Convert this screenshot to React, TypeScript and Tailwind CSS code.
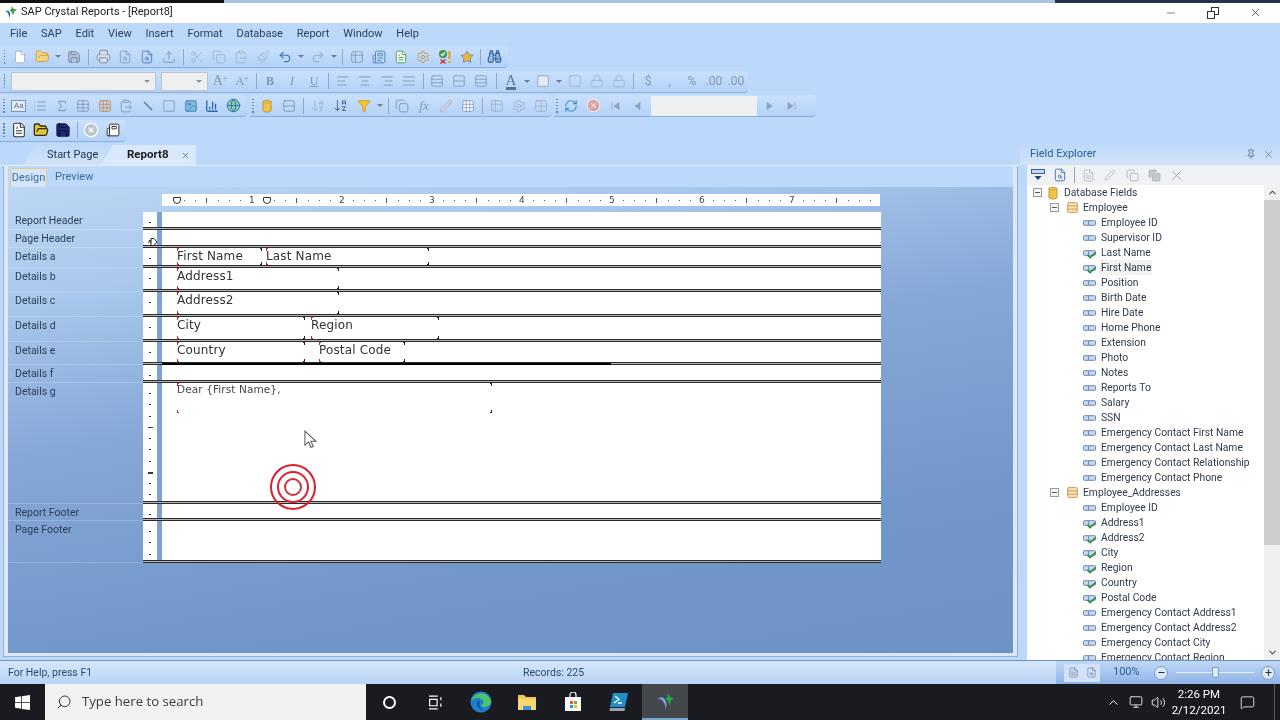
import type { ReactNode } from "react";
import {
  AlignCenter, AlignJustify, AlignLeft, AlignRight, ArrowDownAZ, Binoculars, ChartColumn, ChevronDown, ChevronUp,
  ClipboardPaste, Copy, File, FileSearch, Filter, FolderOpen, Globe, Grid2x2, Grid3x3, Image, MessageSquare,
  Minus, Newspaper, Paintbrush, Pencil, Pin, Plus, Printer, Redo2, RefreshCw, Rows2, Rows3, Save, Scissors, Search,
  Sigma, Square, Table, Table2, Undo2, Upload, X, CircleX, Settings, List, Lock, FileText, Star, Check, Volume2, Monitor,
} from "lucide-react";

const ui = "font-['Roboto',sans-serif]";
const gray = "h-[14px] w-[14px] text-[#7f93ad]";
const pale = "h-[14px] w-[14px] text-[#9fb0c6]";
const blue = "h-[14px] w-[14px] text-[#3f74b5]";

function Slot({ children, narrow }: { children?: ReactNode; narrow?: boolean }) {
  return <span className={narrow ? "flex w-[21.5px] shrink-0 items-center justify-center" : "flex w-[22px] shrink-0 items-center justify-center"}>{children}</span>;
}

function Drop() {
  return (
    <span className="flex w-[10px] shrink-0 items-center justify-center">
      <span className="h-0 w-0 border-x-[3px] border-t-[3px] border-x-transparent border-t-[#6f7f93]" />
    </span>
  );
}

function Sep({ w = "w-[6px]" }: { w?: string }) {
  return (
    <span className={w + " flex h-[16px] shrink-0 justify-center"}>
      <span className="h-full w-px bg-[#8fa9c9]" />
    </span>
  );
}

function Grip({ w = "w-[8px]" }: { w?: string }) {
  return (
    <span className={w + " flex h-[16px] shrink-0 flex-col items-center justify-between py-px"}>
      {[0, 1, 2, 3, 4].map((i) => <span key={i} className="h-[1.5px] w-[1.5px] bg-[#6d84a3]" />)}
    </span>
  );
}

function Bar({ children, className = "" }: { children: ReactNode; className?: string }) {
  return (
    <div className={"flex h-[22px] items-center rounded-r-[4px] border-b border-[#8badd7] bg-gradient-to-b from-[#c9e0fc] to-[#b3d2f7] " + className}>
      {children}
    </div>
  );
}

function Glyph({ children, className = "" }: { children: ReactNode; className?: string }) {
  return <span className={"text-[12px] leading-none text-[#8497ae] " + className}>{children}</span>;
}

function DbIcon() {
  return (
    <svg viewBox="0 0 10 14" className="h-[14px] w-[10px]">
      <path d="M1 2.500C1 1 9 1 9 2.500v9C9 13.500 1 13.500 1 11.500z" fill="#f0c64a" stroke="#b98f2d" strokeWidth="0.9" />
      <path d="M1 3c1.500 1.300 6.500 1.300 8 0" fill="none" stroke="#b98f2d" strokeWidth="0.7" />
    </svg>
  );
}

function Nav({ d }: { d: string }) {
  return (
    <svg viewBox="0 0 10 10" className="h-[10px] w-[10px]" fill="#8fa2ba" stroke="#8fa2ba" strokeWidth="0.7">
      <path d={d} />
    </svg>
  );
}

function Toolbars() {
  return (
    <div className="flex h-[98px] flex-col">
      <div className="flex h-[24px] items-center">
        <Bar className="w-[508px]">
          <Grip w="w-[9px]" />
          <Slot><File className="h-[14px] w-[14px] fill-white text-[#8ea2bb]" strokeWidth={1.3} /></Slot>
          <Slot><FolderOpen className="h-[15px] w-[15px] fill-[#f4d587] text-[#c79a3f]" strokeWidth={1.4} /></Slot>
          <Drop />
          <Slot><Save className="h-[14px] w-[14px] fill-[#b6c6d9] text-[#667f9e]" strokeWidth={1.5} /></Slot>
          <Sep w="w-[7px]" />
          <Slot><Printer className="h-[15px] w-[15px] fill-[#d7dfe9] text-[#74879f]" strokeWidth={1.4} /></Slot>
          <Slot><FileSearch className={gray} strokeWidth={1.4} /></Slot>
          <Slot><FileSearch className={blue} strokeWidth={1.4} /></Slot>
          <Slot><Upload className={gray} strokeWidth={1.5} /></Slot>
          <Sep />
          <Slot><Scissors className={pale} strokeWidth={1.4} /></Slot>
          <Slot><Copy className={pale} strokeWidth={1.4} /></Slot>
          <Slot><ClipboardPaste className={pale} strokeWidth={1.4} /></Slot>
          <Slot><Paintbrush className={pale} strokeWidth={1.4} /></Slot>
          <Slot><Undo2 className={blue} strokeWidth={2} /></Slot>
          <Drop />
          <span className="w-[1px]" />
          <Slot><Redo2 className={pale} strokeWidth={2} /></Slot>
          <Drop />
          <Sep w="w-[7px]" />
          <Slot><Table2 className={gray} strokeWidth={1.4} /></Slot>
          <Slot><Newspaper className={blue} strokeWidth={1.4} /></Slot>
          <Slot><FileText className="h-[14px] w-[14px] fill-white text-[#3f9a4b]" strokeWidth={1.5} /></Slot>
          <Slot><Settings className="h-[14px] w-[14px] text-[#c09a42]" strokeWidth={1.6} /></Slot>
          <Slot>
            <svg viewBox="0 0 16 16" className="h-[16px] w-[16px]">
              <circle cx="6" cy="5" r="4" fill="#3f9a4b" />
              <path d="M4 5l1.5 1.5L8 3.5" stroke="#fff" strokeWidth="1.2" fill="none" />
              <path d="M3.5 10.5l5 4M8.5 10.5l-5 4" stroke="#c7362b" strokeWidth="1.6" />
              <path d="M12.5 2v8M12.5 12v2" stroke="#e2a12f" strokeWidth="2.2" />
            </svg>
          </Slot>
          <Slot><Star className="h-[14px] w-[14px] fill-[#f0b62f] text-[#4f7fb8]" strokeWidth={1.3} /></Slot>
          <Sep w="w-[5px]" />
          <Slot><Binoculars className="h-[15px] w-[15px] fill-[#9dbbe0] text-[#2f5f9f]" strokeWidth={1.7} /></Slot>
        </Bar>
      </div>

      <div className="flex h-[25px] items-center">
        <Bar className="w-[748px]">
          <Grip w="w-[9px]" />
          <span className="ml-[2px] flex h-[19px] w-[145px] shrink-0 items-center justify-end border border-[#b9c4d2] bg-[#efefef] pr-[5px]">
            <span className="h-0 w-0 border-x-[3px] border-t-[3px] border-x-transparent border-t-[#8795a6]" />
          </span>
          <span className="ml-[5px] flex h-[19px] w-[47px] shrink-0 items-center justify-end border border-[#b9c4d2] bg-[#efefef] pr-[5px]">
            <span className="h-0 w-0 border-x-[3px] border-t-[3px] border-x-transparent border-t-[#8795a6]" />
          </span>
          <span className="w-px" />
          <Slot><Glyph className="font-['Liberation_Serif',serif] text-[14px]">A<sup className="text-[8px]">+</sup></Glyph></Slot>
          <Slot><Glyph className="font-['Liberation_Serif',serif] text-[10px]">A<sup className="text-[8px]">+</sup></Glyph></Slot>
          <Sep />
          <Slot><Glyph className="font-['Liberation_Serif',serif] font-bold">B</Glyph></Slot>
          <Slot><Glyph className="font-['Liberation_Serif',serif] italic">I</Glyph></Slot>
          <Slot><Glyph className="font-['Liberation_Serif',serif] underline">U</Glyph></Slot>
          <Sep w="w-[7px]" />
          <Slot><AlignLeft className={gray} strokeWidth={1.5} /></Slot>
          <Slot><AlignCenter className={gray} strokeWidth={1.5} /></Slot>
          <Slot><AlignRight className={gray} strokeWidth={1.5} /></Slot>
          <Slot><AlignJustify className={gray} strokeWidth={1.5} /></Slot>
          <Sep />
          <Slot><Rows3 className={gray} strokeWidth={1.3} /></Slot>
          <Slot><Rows2 className={gray} strokeWidth={1.3} /></Slot>
          <Slot><Rows3 className={gray} strokeWidth={1.3} /></Slot>
          <Sep w="w-[8px]" />
          <Slot>
            <span className="flex flex-col items-center border-b-[3px] border-[#59708e] font-['Liberation_Serif',serif] text-[15px] leading-[14px] text-[#5d7594]">A</span>
          </Slot>
          <Drop />
          <Slot><Grid2x2 className="h-[14px] w-[14px] fill-[#e4ebf4] text-[#8798ad]" strokeWidth={1.2} /></Slot>
          <Drop />
          <Slot><Square className={pale} strokeWidth={1.4} /></Slot>
          <Slot><Lock className={pale} strokeWidth={1.4} /></Slot>
          <Slot><Lock className={pale} strokeWidth={1.4} /></Slot>
          <Sep w="w-[7px]" />
          <Slot><Glyph>$</Glyph></Slot>
          <Slot><Glyph>,</Glyph></Slot>
          <Slot><Glyph>%</Glyph></Slot>
          <Slot><Glyph className="text-[9px]">.00</Glyph></Slot>
          <Slot><Glyph className="text-[9px]">.00</Glyph></Slot>
        </Bar>
      </div>

      <div className="flex h-[24px] items-center gap-[3px]">
        <Bar className="w-[247px]">
          <Grip />
          <Slot narrow><span className="flex h-[12px] w-[15px] items-center justify-center border border-[#7f93ad] bg-[#dfe8f3] text-[8px] leading-none text-[#5f7690]">Aa</span></Slot>
          <Slot narrow><List className={gray} strokeWidth={1.5} /></Slot>
          <Slot narrow><Sigma className={gray} strokeWidth={1.7} /></Slot>
          <Slot narrow><Table className={gray} strokeWidth={1.4} /></Slot>
          <Slot narrow><Grid3x3 className="h-[14px] w-[14px] text-[#c98644]" strokeWidth={1.4} /></Slot>
          <Slot narrow><ClipboardPaste className={gray} strokeWidth={1.4} /></Slot>
          <Slot narrow><svg viewBox="0 0 14 14" className="h-[14px] w-[14px]"><path d="M3 3l8 8" stroke="#5f7690" strokeWidth="1.2" /></svg></Slot>
          <Slot narrow><Square className={gray} strokeWidth={1.3} /></Slot>
          <Slot narrow><Image className="h-[14px] w-[14px] fill-[#7fc0dc] text-[#3f74b5]" strokeWidth={1.5} /></Slot>
          <Slot narrow><ChartColumn className="h-[14px] w-[14px] text-[#2f66ad]" strokeWidth={2.2} /></Slot>
          <Slot narrow><Globe className="h-[15px] w-[15px] fill-[#8fc7a6] text-[#2b76b5]" strokeWidth={1.5} /></Slot>
        </Bar>
        <Bar className="w-[302px]">
          <Grip w="w-[6px]" />
          <Slot><DbIcon /></Slot>
          <Slot><Rows2 className={gray} strokeWidth={1.5} /></Slot>
          <Sep />
          <span className="w-px" />
          <Slot><ArrowDownAZ className={pale} strokeWidth={1.5} /></Slot>
          <Slot><ArrowDownAZ className="h-[15px] w-[15px] text-[#3d6aa5]" strokeWidth={1.6} /></Slot>
          <span className="w-[2px]" />
          <Slot><Filter className="h-[14px] w-[14px] fill-[#f2c430] text-[#c99c22]" strokeWidth={1.4} /></Slot>
          <Drop />
          <Sep />
          <Slot><Copy className={gray} strokeWidth={1.4} /></Slot>
          <Slot><Glyph className="font-['Liberation_Serif',serif] text-[13px] italic text-[#6d829c]">fx</Glyph></Slot>
          <Slot><Pencil className="h-[14px] w-[14px] text-[#cfa3a3]" strokeWidth={1.5} /></Slot>
          <Slot><Grid3x3 className="h-[14px] w-[14px] fill-white text-[#6f8db5]" strokeWidth={1.2} /></Slot>
          <Sep w="w-[7px]" />
          <Slot><Table2 className={pale} strokeWidth={1.5} /></Slot>
          <Slot><Settings className={pale} strokeWidth={1.6} /></Slot>
          <Slot><Grid2x2 className={pale} strokeWidth={1.5} /></Slot>
        </Bar>
        <Bar className="w-[262px] -ml-[1px]">
          <Grip w="w-[6px]" />
          <Slot><RefreshCw className="h-[14px] w-[14px] text-[#3f8fc9]" strokeWidth={2} /></Slot>
          <Slot><CircleX className="h-[15px] w-[15px] fill-[#d8a3a3] text-[#f4e8e8]" strokeWidth={1.8} /></Slot>
          <Slot><Nav d="M2 1.500v7M9 1.500L4 5l5 3.500z" /></Slot>
          <Slot><Nav d="M8 1.500L3 5l5 3.500z" /></Slot>
          <span className="ml-[3px] mr-[2px] h-[20px] w-[106px] shrink-0 bg-[#eeeff1]" />
          <Slot><Nav d="M2 1.500L7 5 2 8.500z" /></Slot>
          <Slot><Nav d="M8 1.500v7M1 1.500L6 5 1 8.500z" /></Slot>
        </Bar>
      </div>

      <div className="flex h-[25px] items-center">
        <Bar className="w-[126px]">
          <Grip />
          <Slot><FileText className="h-[16px] w-[16px] fill-white text-[#333]" strokeWidth={1.6} /></Slot>
          <Slot><FolderOpen className="h-[16px] w-[16px] fill-[#e6c23f] text-[#24300f]" strokeWidth={1.9} /></Slot>
          <Slot><Save className="h-[16px] w-[16px] fill-[#1d2a7a] text-[#10143f]" strokeWidth={1.9} /></Slot>
          <Sep />
          <Slot><CircleX className="h-[16px] w-[16px] fill-[#b9c2cd] text-white" strokeWidth={1.8} /></Slot>
          <Slot><Newspaper className="h-[14px] w-[14px] fill-white text-[#222]" strokeWidth={1.6} /></Slot>
        </Bar>
      </div>
    </div>
  );
}

function Ruler() {
  const ticks = Array.from({ length: 63 }, (_, i) => i + 1);
  return (
    <div className="relative ml-[154px] flex h-[12px] w-[718px] items-center bg-white pl-[5.6px] font-['DejaVu_Sans',sans-serif] text-[9px] leading-none text-[#444]">
      {ticks.map((t) => (
        <span key={t} className="flex w-[11.25px] shrink-0 justify-center">
          {t % 8 === 0 ? t / 8 : t % 4 === 0 ? <span className="h-[5px] w-px bg-[#555]" /> : <span className="h-px w-px bg-[#555]" />}
        </span>
      ))}
      <span className="absolute left-[11px] top-[3px] h-[7px] w-[8px] rounded-b-[4px] border border-[#333] bg-white" />
      <span className="absolute left-[101px] top-[3px] h-[7px] w-[8px] rounded-b-[4px] border border-[#333] bg-white" />
    </div>
  );
}

function Field({ w, ml = "", children, className = "pt-[1px]" }: { w: string; ml?: string; children?: ReactNode; className?: string }) {
  return (
    <div className={"relative h-full shrink-0 " + w + " " + ml + " " + className}>
      <span className="absolute left-0 top-0 h-[3px] w-[2px] border-l border-t border-[#d5202e]" />
      <span className="absolute bottom-0 left-0 h-[3px] w-[2px] border-b border-l border-[#d5202e]" />
      <span className="absolute right-0 top-0 h-[3px] w-[2px] border-r border-t border-[#222]" />
      <span className="absolute bottom-0 right-0 h-[3px] w-[2px] border-b border-r border-[#222]" />
      {children}
    </div>
  );
}

function Section({ label, h, dots, children, thick, long }: { label: string; h: string; dots: number; children?: ReactNode; thick?: boolean; long?: boolean }) {
  return (
    <div className="flex">
      <div className="w-[135px] shrink-0 border-b border-[#ffffff33] pl-[7px] pt-[2px] text-[10.5px] leading-[14px] text-[#2c3e55]">{label}</div>
      <div className="w-[738px] shrink-0">
        <div className={"flex " + h}>
          <div className="flex w-[14px] shrink-0 flex-col items-center bg-white pt-[10px]">
            {Array.from({ length: dots }, (_, i) => (
              <span key={i} className="flex h-[11.25px] shrink-0 justify-center">
                <span className={long && i === 3 ? "h-px w-[5px] bg-[#333]" : long && i === 7 ? "h-[2px] w-[5px] bg-[#333]" : "h-px w-[2px] bg-[#333]"} />
              </span>
            ))}
          </div>
          <div className="w-[5px] shrink-0 bg-[#7da2d4]" />
          <div className="flex min-w-0 flex-1 bg-white pl-[15px] font-['DejaVu_Sans',sans-serif] text-[12px] leading-[15px] tracking-[0.15px] text-[#333]">{children}</div>
        </div>
        <div className="relative h-[3px] border-y border-[#2a2a2a] bg-[#b5b5b5]">
          {thick && <span className="absolute -bottom-px left-[19px] h-[2px] w-[449px] bg-black" />}
        </div>
      </div>
    </div>
  );
}

function Design() {
  return (
    <div className="relative min-h-0 flex-1 overflow-hidden bg-[linear-gradient(170deg,#bcd7f5_0%,#a9c8ec_18%,#86a8d8_42%,#7196c9_75%,#6d92c4_100%)] pt-[7px]">
      <Ruler />
      <div className="mt-[6px] flex flex-col">
        <Section label="Report Header" h="h-[15px]" dots={1} />
        <Section label="Page Header" h="h-[15px]" dots={1} />
        <Section label="Details a" h="h-[17px]" dots={1}>
          <Field w="w-[85px]"><span>First Name</span></Field>
          <Field w="w-[163px]" ml="ml-[4px]"><span>Last Name</span></Field>
        </Section>
        <Section label="Details b" h="h-[21px]" dots={1}>
          <Field w="w-[162px]"><span>Address1</span></Field>
        </Section>
        <Section label="Details c" h="h-[22px]" dots={1}>
          <Field w="w-[162px]"><span>Address2</span></Field>
        </Section>
        <Section label="Details d" h="h-[22px]" dots={1}>
          <Field w="w-[128px]"><span>City</span></Field>
          <Field w="w-[128px]" ml="ml-[6px]"><span>Region</span></Field>
        </Section>
        <Section label="Details e" h="h-[20px]" dots={1} thick>
          <Field w="w-[128px]"><span>Country</span></Field>
          <Field w="w-[86px]" ml="ml-[14px]"><span>Postal Code</span></Field>
        </Section>
        <Section label="Details f" h="h-[15px]" dots={1} />
        <Section label="Details g" h="h-[118px]" dots={10} long>
          <Field w="w-[315px]" className="!h-[30px]">
            <span className="block text-[10.5px] leading-[13px] tracking-[0.1px] text-[#444]">Dear {"{"}First Name{"}"},</span>
          </Field>
        </Section>
        <Section label="Report Footer" h="h-[14px]" dots={1} />
        <Section label="Page Footer" h="h-[39px]" dots={3} />
      </div>

      {/* drag cursor, mouse pointer and click ring sit over the report */}
      <svg viewBox="0 0 12 12" className="absolute left-[139px] top-[49px] h-[12px] w-[12px]">
        <path d="M1 6h3M4 2.5h3l3 3.5-3 3.5H4z" fill="#fff" stroke="#222" strokeWidth="1" />
      </svg>
      <svg viewBox="0 0 14 20" className="absolute left-[296px] top-[243px] h-[19px] w-[13px]">
        <path d="M1 1v15l4-3.5 2.5 6 2.5-1-2.5-5.5H13z" fill="#fff" stroke="#555" strokeWidth="1.1" />
      </svg>
      <svg viewBox="0 0 48 48" className="absolute left-[261px] top-[276px] h-[48px] w-[48px]">
        <g fill="none" stroke="#dc1f2e" strokeWidth="2">
          <circle cx="24" cy="24" r="22" />
          <circle cx="24" cy="24" r="15" />
          <circle cx="24" cy="24" r="8" stroke="#c9323e" />
        </g>
      </svg>
    </div>
  );
}

function FieldIcon({ checked }: { checked?: boolean }) {
  return (
    <span className="relative flex w-[14px] shrink-0 items-center">
      <svg viewBox="0 0 14 6" className="h-[6px] w-[13px]">
        <rect x="0.5" y="0.5" width="13" height="5" rx="1" fill="#c8d8ee" stroke="#5f7fb3" />
        <path d="M6 1v4" stroke="#5f7fb3" />
      </svg>
      {checked && <Check className="absolute -bottom-[5px] left-[3px] h-[11px] w-[11px] text-[#1c8c2a]" strokeWidth={3.2} />}
    </span>
  );
}

function MinusBox() {
  return (
    <span className="flex h-[9px] w-[9px] shrink-0 items-center justify-center border border-[#9a9a9a] bg-[#f4f4f4]">
      <span className="h-px w-[5px] bg-[#555]" />
    </span>
  );
}

function Leaf({ name, checked, hot }: { name: string; checked?: boolean; hot?: boolean }) {
  return (
    <div className="flex h-[15px] items-center pl-[56px]">
      <FieldIcon checked={checked} />
      <span className={hot ? "ml-[3px] bg-[#f2f2f2] px-px" : "ml-[3px] px-px"}>{name}</span>
    </div>
  );
}

function TableRow({ name }: { name: string }) {
  return (
    <div className="flex h-[15px] items-center pl-[23px]">
      <MinusBox />
      <Table className="ml-[7px] h-[13px] w-[13px] fill-[#f9e6b8] text-[#c98a3a]" strokeWidth={1.5} />
      <span className="ml-[4px]">{name}</span>
    </div>
  );
}

const employee: [string, boolean?][] = [
  ["Employee ID"], ["Supervisor ID"], ["Last Name", true], ["First Name", true], ["Position"], ["Birth Date"], ["Hire Date"],
  ["Home Phone"], ["Extension"], ["Photo"], ["Notes"], ["Reports To"], ["Salary"], ["SSN"], ["Emergency Contact First Name"],
  ["Emergency Contact Last Name"], ["Emergency Contact Relationship"], ["Emergency Contact Phone"],
];
const addresses: [string, boolean?][] = [
  ["Employee ID"], ["Address1", true], ["Address2", true], ["City", true], ["Region", true], ["Country", true], ["Postal Code", true],
  ["Emergency Contact Address1"], ["Emergency Contact Address2"], ["Emergency Contact City"], ["Emergency Contact Region"],
];

function FieldExplorer() {
  return (
    <aside className="flex w-[260px] shrink-0 flex-col bg-[#bcd8fa] pl-[7px]">
      <div className="-ml-[7px] flex h-[22px] shrink-0 items-center justify-between bg-gradient-to-b from-[#bcd8fa] to-[#d2e3f8] pl-[10px] pr-[6px] text-[11px] text-[#2c5d92]">
        <span>Field Explorer</span>
        <span className="flex items-center gap-[7px]">
          <Pin className="h-[10px] w-[10px] text-[#4a6f9c]" strokeWidth={2} />
          <X className="h-[11px] w-[11px] text-[#4a6f9c]" strokeWidth={1.6} />
        </span>
      </div>
      <div className="flex h-[20px] shrink-0 items-center bg-[#f0f1f3]">
        <Slot>
          <svg viewBox="0 0 14 12" className="h-[12px] w-[14px]">
            <rect x="0.5" y="0.5" width="13" height="4" fill="#c8d8ee" stroke="#36609f" />
            <path d="M3.500 7h7L7 11z" fill="#1f3f7a" />
          </svg>
        </Slot>
        <Slot><FileSearch className="h-[14px] w-[14px] text-[#3f74b5]" strokeWidth={1.6} /></Slot>
        <Sep />
        <Slot><FileText className="h-[13px] w-[13px] text-[#b0b4ba]" strokeWidth={1.5} /></Slot>
        <Slot><Pencil className="h-[12px] w-[12px] text-[#b0b4ba]" strokeWidth={1.5} /></Slot>
        <Slot><Copy className="h-[13px] w-[13px] text-[#a8acb2]" strokeWidth={1.5} /></Slot>
        <Slot><Copy className="h-[13px] w-[13px] fill-[#c4c8ce] text-[#a8acb2]" strokeWidth={1.5} /></Slot>
        <Slot><X className="h-[15px] w-[15px] text-[#9a9ea4]" strokeWidth={1.4} /></Slot>
      </div>
      <div className="flex min-h-0 flex-1">
        <div className="min-w-0 flex-1 overflow-hidden bg-white text-[10.3px] leading-[15px] text-[#2f3a4a]">
          <div className="flex h-[15px] items-center pl-[6px]">
            <MinusBox />
            <span className="ml-[6px] flex w-[10px] justify-center"><DbIcon /></span>
            <span className="ml-[6px]">Database Fields</span>
          </div>
          <TableRow name="Employee" />
          {employee.map(([n, c]) => <Leaf key={n} name={n} checked={c} hot={n === "First Name"} />)}
          <TableRow name="Employee_Addresses" />
          {addresses.map(([n, c]) => <Leaf key={"a" + n} name={n} checked={c} />)}
        </div>
        <div className="flex w-[16px] shrink-0 flex-col items-center bg-[#f0f0f0]">
          <ChevronUp className="my-[2px] h-[11px] w-[11px] text-[#555]" strokeWidth={2.5} />
          <div className="h-[345px] w-full bg-[#cdcdcd]" />
          <div className="flex-1" />
          <ChevronDown className="my-[2px] h-[11px] w-[11px] text-[#555]" strokeWidth={2.5} />
        </div>
      </div>
    </aside>
  );
}

function Taskbar() {
  return (
    <div className="flex h-[36px] shrink-0 items-center bg-[#1a1b20] text-white">
      <div className="flex w-[45px] shrink-0 justify-center">
        <svg viewBox="0 0 16 16" className="h-[15px] w-[15px]" fill="#fff">
          <path d="M0 2.3l6.5-.9v6.2H0zM7.3 1.3L16 0v7.6H7.3zM0 8.4h6.5v6.2L0 13.7zM7.3 8.4H16V16l-8.7-1.2z" />
        </svg>
      </div>
      <div className="flex h-full w-[321px] shrink-0 items-center bg-[#f2f2f2] pl-[11px] text-[#3a3a3a]">
        <Search className="h-[16px] w-[16px] -scale-x-100 text-[#333]" strokeWidth={1.5} />
        <span className="ml-[10px] font-['Open_Sans',sans-serif] text-[13.2px]">Type here to search</span>
      </div>
      <div className="flex h-full items-center">
        <span className="flex w-[46px] justify-center"><span className="h-[13px] w-[13px] rounded-full border-2 border-white" /></span>
        <span className="flex w-[46px] justify-center">
          <svg viewBox="0 0 14 14" className="h-[15px] w-[15px]" fill="none" stroke="#fff" strokeWidth="1.1"><path d="M1 1h8M1 13h8M1.5 4h7v6h-7zM12 2v3M12 8v3" /></svg>
        </span>
        <span className="flex w-[46px] justify-center">
          <svg viewBox="0 0 22 22" className="h-[22px] w-[22px]">
            <circle cx="11" cy="11" r="10.5" fill="#1f7fc9" />
            <path d="M21 12c0-5-4-9.5-9.5-9.5C6 2.500 2 6 1.500 10c2-4 10-5 12 1 .5 2-1 3-3 3 2 3 8 3 10.500-2z" fill="#4cc46a" />
            <path d="M10 9c-3 1-4 5-1 8 1 1 3 3.500 6 2.700-4 0-7-6-5-10.700z" fill="#0f4f9f" />
          </svg>
        </span>
        <span className="flex w-[46px] justify-center">
          <svg viewBox="0 0 20 18" className="h-[18px] w-[20px]">
            <path d="M1 2h6l2 2h10v13H1z" fill="#f2c94c" />
            <path d="M1 6h18v11H1z" fill="#f7d774" />
            <path d="M6 17v-4h8v4z" fill="#3f8fd6" />
          </svg>
        </span>
        <span className="flex w-[46px] justify-center">
          <svg viewBox="0 0 18 20" className="h-[20px] w-[18px]">
            <path d="M6 5V3a3 3 0 0 1 6 0v2" stroke="#fff" fill="none" strokeWidth="1.2" />
            <rect x="1" y="5" width="16" height="14" fill="#fff" />
            <rect x="6" y="9" width="3" height="3" fill="#e8562a" /><rect x="10" y="9" width="3" height="3" fill="#6bb52e" />
            <rect x="6" y="13" width="3" height="3" fill="#1f9fe0" /><rect x="10" y="13" width="3" height="3" fill="#f5b90f" />
          </svg>
        </span>
        <span className="flex w-[46px] justify-center">
          <svg viewBox="0 0 20 20" className="h-[20px] w-[20px]">
            <path d="M4 1h15l-3 14H1z" fill="#1f8fc9" />
            <path d="M1 16h15l-.5 3H.5z" fill="#9aa4ad" />
            <path d="M6 4l4 3.500-5 3.500M9 11h4" stroke="#fff" strokeWidth="1.3" fill="none" />
          </svg>
        </span>
        <span className="flex h-full w-[46px] items-center justify-center border-b-2 border-[#7aa7d0] bg-[#44474b]">
          <svg viewBox="0 0 18 18" className="h-[19px] w-[19px]">
            <path d="M1 6c5 1 8 4 8 11 2-6 1-10-3-12z" fill="#7b9fd8" />
            <path d="M11 1l2.500 4L17 6l-3 2-1 5-2-5-2-2 2-1z" fill="#1fae3f" />
          </svg>
        </span>
      </div>
      <div className="ml-auto flex h-full items-center pr-[5px]">
        <ChevronUp className="mr-[8.5px] h-[15px] w-[15px]" strokeWidth={1.5} />
        <Monitor className="mr-[7.5px] h-[14px] w-[14px]" strokeWidth={1.4} />
        <Volume2 className="mr-[8.5px] h-[15px] w-[15px]" strokeWidth={1.4} />
        <div className="mr-[16px] flex w-[50px] flex-col items-center text-[11.5px] leading-[16px]">
          <span>2:26 PM</span>
          <span>2/12/2021</span>
        </div>
        <MessageSquare className="mr-[19px] h-[15px] w-[15px]" strokeWidth={1.3} />
        <span className="h-full w-px bg-[#555]" />
      </div>
    </div>
  );
}

export default function App() {
  return (
    <div className={"flex h-[720px] w-[1280px] flex-col overflow-hidden bg-[#bcd8fa] blur-[0.3px] " + ui}>
      <div className="flex h-[3px] shrink-0">
        <div className="w-[224px] bg-[#111]" />
        <div className="flex-1 bg-[#a9c3de]" />
        <div className="w-[225px] bg-[#22344c]" />
      </div>
      <header className="flex h-[20px] shrink-0 items-center bg-white pb-[1px] text-[#222]">
        <svg viewBox="0 0 16 14" className="ml-[3px] h-[13px] w-[15px]">
          <path d="M1 5c3 0 5 2 6 8 1-3 1-6-1-8z" fill="#1d6fa8" />
          <path d="M9 0l2 3 4 1-3 2-1 4-2-4-2-1 2-2z" fill="#2aa13c" />
        </svg>
        <span className="ml-[3px] text-[11px]">SAP Crystal Reports - [Report8]</span>
        <div className="ml-auto flex items-center pr-[18px]">
          <Minus className="mr-[30px] h-[12px] w-[12px] text-[#333]" strokeWidth={1.2} />
          <span className="relative mr-[30px] h-[12px] w-[12px]">
            <span className="absolute right-0 top-0 h-[8px] w-[8px] border border-[#333]" />
            <span className="absolute bottom-0 left-0 h-[8px] w-[8px] border border-[#333] bg-white" />
          </span>
          <X className="h-[13px] w-[13px] text-[#333]" strokeWidth={1.3} />
        </div>
      </header>
      <nav className="flex h-[22px] shrink-0 items-center gap-[13.8px] pl-[10px] text-[11px] text-[#29415f]">
        {["File", "SAP", "Edit", "View", "Insert", "Format", "Database", "Report", "Window", "Help"].map((m) => <span key={m}>{m}</span>)}
      </nav>
      <Toolbars />

      <div className="flex min-h-0 flex-1">
        <main className="flex w-[1020px] shrink-0 flex-col">
          <div className="flex h-[23px] shrink-0 items-end border-b border-[#e8f0fa] pl-[23px] text-[11px] text-[#25384f]">
            <div className="flex h-[20px] w-[87px] items-center bg-gradient-to-b from-[#c0daf9] to-[#d0e2f9] pl-[24px] [clip-path:polygon(12px_0,100%_0,77px_100%,0_100%)]">Start Page</div>
            <div className="-ml-[10px] flex h-[20px] w-[96px] items-center bg-[#d9e8fc] pl-[27px] [clip-path:polygon(13px_0,100%_0,100%_100%,0_100%)]">
              <span className="text-[11.5px] font-bold text-[#1c1c1c]">Report8</span>
              <X className="ml-[12px] h-[9px] w-[9px] text-[#44607f]" strokeWidth={2} />
            </div>
          </div>
          <div className="mb-[3px] ml-[3px] mr-[2px] flex min-h-0 flex-1 flex-col border-x border-b border-[#98aec9] bg-[#dce8f8] px-[4px] pb-[3px]">
            <div className="flex h-[21px] shrink-0 items-end gap-[8px] bg-[#bcd8fa] pl-[2px] text-[11px]">
              <span className="flex h-[19px] w-[37px] items-center justify-center rounded-t-[2px] border-x border-t border-[#e9cb86] bg-[#d5e5fb] text-[#3a6c9f]">Design</span>
              <span className="flex h-[19px] items-center text-[#3a6c9f]">Preview</span>
            </div>
            <Design />
          </div>
        </main>
        <FieldExplorer />
      </div>

      <footer className="flex h-[24px] shrink-0 items-center border-t border-[#6f92bd] bg-gradient-to-b from-[#d6e7fb] to-[#b8d3f4] text-[10.5px] text-[#2c4a6e]">
        <span className="ml-[8px] w-[515px]">For Help, press F1</span>
        <span>Records: 225</span>
        <div className="ml-auto flex h-full w-[224px] items-center bg-gradient-to-b from-[#c0d8f6] to-[#8fb4e6] pl-[8px]">
          <span className="flex h-[18px] w-[36px] items-center justify-around bg-[#d3e2f6]">
            <FileText className="h-[11px] w-[11px] text-[#667f9e]" strokeWidth={1.5} />
            <FileSearch className="h-[11px] w-[11px] text-[#667f9e]" strokeWidth={1.5} />
          </span>
          <span className="ml-[13px] w-[41px] text-[11px] text-[#2f5f9c]">100%</span>
          <span className="flex h-[14px] w-[14px] shrink-0 items-center justify-center rounded-full border border-[#7f9cc4] bg-[#dbe8f8]"><Minus className="h-[9px] w-[9px] text-[#333]" strokeWidth={3} /></span>
          <span className="relative ml-[8px] h-px w-[78px] shrink-0 bg-[#e8f1fc]">
            <span className="absolute -top-[5px] left-[36px] h-[11px] w-[7px] rounded-b-[3px] border border-[#7f9cc4] bg-[#dce9f8]" />
          </span>
          <span className="ml-[7px] flex h-[14px] w-[14px] shrink-0 items-center justify-center rounded-full border border-[#7f9cc4] bg-[#dbe8f8]"><Plus className="h-[9px] w-[9px] text-[#333]" strokeWidth={3} /></span>
        </div>
      </footer>
      <Taskbar />
    </div>
  );
}
